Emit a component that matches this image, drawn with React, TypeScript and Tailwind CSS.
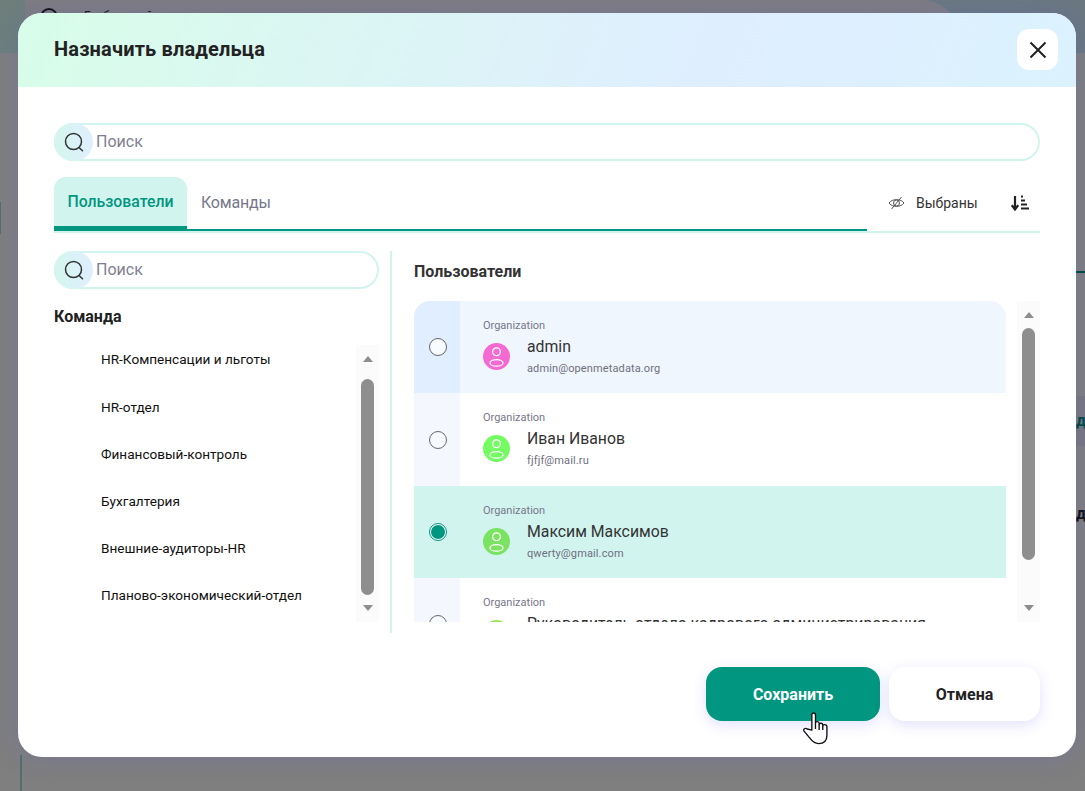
const users = [
  { name: 'admin', email: 'admin@openmetadata.org', avatar: 'bg-[#f569d2]', row: 'bg-[#eff6fe]', cell: 'bg-[#e0eeff]', rowH: 'h-[92px]', checked: false },
  { name: 'Иван Иванов', email: 'fjfjf@mail.ru', avatar: 'bg-[#73fd62]', row: 'bg-white', cell: 'bg-[#f4f8fe]', rowH: 'h-[93px]', checked: false },
  { name: 'Максим Максимов', email: 'qwerty@gmail.com', avatar: 'bg-[#7ae362]', row: 'bg-[#d2f4ef]', cell: 'bg-[#d2f4ef]', rowH: 'h-[92px]', checked: true },
  { name: 'Руководитель отдела кадрового администрирования', email: 'hr@mail.ru', avatar: 'bg-[#a3dc5f]', row: 'bg-white', cell: 'bg-[#f4f8fe]', rowH: 'h-[92px]', checked: false },
]

const teams = [
  'HR-Компенсации и льготы',
  'HR-отдел',
  'Финансовый-контроль',
  'Бухгалтерия',
  'Внешние-аудиторы-HR',
  'Планово-экономический-отдел',
]

function SearchIcon() {
  return (
    <svg width="20" height="20" viewBox="0 0 20 20" fill="none" stroke="#333" strokeWidth="1.5">
      <circle cx="9.5" cy="9.5" r="8" />
      <path d="M15 15.5 L18.5 18.8" strokeLinecap="round" />
    </svg>
  )
}

function SearchBox() {
  return (
    <div className="flex h-[38px] items-center rounded-full border-2 border-[#d2f4ef]">
      <div className="-ml-[2px] flex h-[38px] w-[39px] shrink-0 items-center justify-center rounded-full bg-gradient-to-r from-[#d4f6ec] to-[#dfeeff]">
        <SearchIcon />
      </div>
      <span className="ml-[3px] text-base text-[#7f7f8f]">Поиск</span>
    </div>
  )
}

function Scrollbar({ thumb }: { thumb: string }) {
  return (
    <div className="flex h-full w-[23px] shrink-0 flex-col items-center bg-[#fbfbfb] pt-[11px]">
      <div className="h-0 w-0 border-x-[5.5px] border-b-[6px] border-x-transparent border-b-[#8e8e8e]" />
      <div className={`w-[13px] rounded-full bg-[#8e8e8e] ${thumb}`} />
      <div className="h-0 w-0 border-x-[5.5px] border-t-[6px] border-x-transparent border-t-[#8e8e8e]" />
    </div>
  )
}

function UserIcon() {
  return (
    <svg width="15" height="20" viewBox="0 0 15 20" fill="none" stroke="#fff" strokeWidth="1.3">
      <circle cx="7.5" cy="4.7" r="3.9" />
      <ellipse cx="7.5" cy="15.9" rx="6.5" ry="3.3" />
    </svg>
  )
}

function UserRow({ user }: { user: (typeof users)[number] }) {
  return (
    <div className={`flex shrink-0 ${user.rowH} ${user.row}`}>
      <div className={`flex w-[46px] shrink-0 items-center justify-center pl-[2px] ${user.cell}`}>
        {user.checked ? (
          <div className="flex h-[18px] w-[18px] items-center justify-center rounded-full border border-[#00967f] bg-white">
            <div className="h-[14px] w-[14px] rounded-full bg-[#00967f]" />
          </div>
        ) : (
          <div className="h-[18px] w-[18px] rounded-full border border-[#666] bg-[#f8fbff]" />
        )}
      </div>
      <div className="min-w-0 flex-1 pl-[23px] pt-[18px]">
        <p className="h-[14px] text-[11px] leading-[14px] text-[#77778a]">Organization</p>
        <div className="flex items-start gap-[17px]">
          <div className={`mt-[10px] flex h-[27px] w-[27px] shrink-0 items-center justify-center rounded-full ${user.avatar}`}>
            <UserIcon />
          </div>
          <div className="mt-[2px] min-w-0">
            <p className="h-[24px] whitespace-nowrap text-[15.8px] leading-[24px] text-[#333]">{user.name}</p>
            <p className="mt-[3px] text-[11px] leading-[14px] tracking-[0.12px] text-[#6f6f7f]">{user.email}</p>
          </div>
        </div>
      </div>
    </div>
  )
}

export default function App() {
  return (
    <div className="relative h-[791px] w-[1085px] overflow-hidden bg-white font-['Roboto',sans-serif]">
      {/* page behind the dialog */}
      <div className="flex h-[53px] bg-gradient-to-r from-[#dcfff6] to-[#d6f1ff] pl-[25px] pr-[124px]">
        <div className="flex h-full flex-1 items-start gap-[26px] rounded-tr-[40px] bg-[#fdfbff] pl-[15px] pt-[8px] text-xs text-[#333]">
          <div className="h-[18px] w-[18px] rounded-full border-2 border-[#222]" />
          <span>Глобальный поиск</span>
        </div>
      </div>
      <div className="flex h-[738px] justify-between">
        <div className="w-[21px]">
          <div className="mt-[149px] h-[32px] w-px bg-[#a8dcd8]" />
          <div className="ml-[20px] mt-[521px] h-[36px] w-[2px] bg-[#a8dcd8]" />
        </div>
        <div className="w-[9px] overflow-hidden whitespace-nowrap text-base font-bold">
          <div className="mt-[218px] h-[2px] bg-[#00967f]" />
          <p className="mt-[123px] bg-[#f0f0f8] py-[13px] leading-[24px] text-[#00967f]">данные</p>
          <p className="mt-[56px] leading-[24px] text-[#222]">дата</p>
        </div>
      </div>
      <div className="absolute inset-0 bg-black/50" />

      {/* dialog */}
      <div className="absolute left-[18px] top-[13px] flex h-[744px] w-[1058px] flex-col overflow-hidden rounded-[24px] bg-white shadow-[0_0_28px_rgba(70,70,255,0.16)]">
        <div className="flex h-[74px] shrink-0 items-center justify-between bg-[linear-gradient(110deg,#d8fde9_0%,#dfeeff_65%,#dbf2fe_100%)] pb-[1px] pl-[36px] pr-[18px]">
          <h1 className="-mt-[1px] text-xl font-bold tracking-[0.16px] text-[#222]">Назначить владельца</h1>
          <button className="flex h-[41px] w-[41px] items-center justify-center rounded-xl bg-white">
            <svg width="18" height="18" viewBox="0 0 18 18" stroke="#222" strokeWidth="2">
              <path d="M1.5 1.5 L16.5 16.5 M16.5 1.5 L1.5 16.5" />
            </svg>
          </button>
        </div>

        <div className="flex flex-1 flex-col px-[36px] pt-[36px]">
          <SearchBox />

          <div className="mt-[16px] flex h-[56px] shrink-0 border-b-2 border-[#d2f4ef]">
            <div className="flex h-[54px] w-[813px] shrink-0 items-start border-b-2 border-[#00967f]">
              <div className="flex h-[53px] w-[133px] items-center justify-center rounded-t-xl border-b-4 border-[#00967f] bg-[#d2f4ef] text-[15.8px] font-medium text-[#00967f]">
                Пользователи
              </div>
              <div className="flex h-[51px] items-center pl-[14px] text-base tracking-[-0.2px] text-[#77778a]">Команды</div>
            </div>
            <div className="flex flex-1 items-center pb-[3px] pl-[21px] pr-[11px]">
              <svg width="17" height="14" viewBox="0 0 17 14" fill="none" stroke="#555" strokeWidth="1">
                <path d="M1 7 C4 2.5 13 2.5 16 7 C13 11.5 4 11.5 1 7 Z" />
                <circle cx="8.5" cy="7" r="3" />
                <path d="M3.5 13 L13.5 1" />
              </svg>
              <span className="ml-[11px] text-sm text-[#333]">Выбраны</span>
              <svg className="ml-auto" width="18" height="16" viewBox="0 0 18 16" fill="none" stroke="#222">
                <path d="M4 1 V14" strokeWidth="2.2" />
                <path d="M0.8 10.2 L4 14.5 L7.2 10.2" strokeWidth="2.2" />
                <path d="M10 1.5 H12 M10 5.5 H14 M10 9.5 H16 M10 13.5 H18" strokeWidth="2" />
              </svg>
            </div>
          </div>

          <div className="mt-[18px] flex h-[382px] shrink-0">
            <div className="w-[325px] shrink-0">
              <SearchBox />
              <h2 className="mt-[16px] text-base font-bold leading-[24px] text-[#222]">Команда</h2>
              <div className="mt-[16px] flex h-[277px]">
                <div className="flex flex-1 flex-col gap-[27.2px] pl-[47px] pt-[4.4px]">
                  {teams.map((team) => (
                    <p key={team} className="text-[13.6px] leading-[20px] text-[#111]">{team}</p>
                  ))}
                </div>
                <Scrollbar thumb="mt-[17px] mb-[10px] h-[216px]" />
              </div>
            </div>
            <div className="ml-[11px] flex-1 border-l-2 border-[#d2f4ef] pl-[22px]">
              <h2 className="mt-[9px] text-base font-bold leading-[24px] text-[#333]">Пользователи</h2>
              <div className="mt-[17px] flex h-[321px] gap-[11px]">
                <div className="flex flex-1 flex-col overflow-hidden rounded-t-2xl">
                  {users.map((user) => (
                    <UserRow key={user.name} user={user} />
                  ))}
                </div>
                <Scrollbar thumb="mt-[10px] mb-[45px] h-[232px]" />
              </div>
            </div>
          </div>

          <div className="mt-[34px] flex justify-end gap-[9px]">
            <button className="h-[54px] w-[174px] rounded-2xl bg-[#00967f] pt-[1px] text-base font-bold text-white shadow-[0_4px_14px_rgba(90,90,255,0.18)]">Сохранить</button>
            <button className="h-[54px] w-[151px] rounded-2xl bg-white pt-[1px] text-base font-bold text-[#222] shadow-[0_4px_14px_rgba(90,90,255,0.18)]">Отмена</button>
          </div>
        </div>
      </div>

      {/* mouse cursor */}
      <svg className="absolute left-[803px] top-[712px]" width="26" height="33" viewBox="0 0 25 31" fill="#fff" stroke="#111" strokeWidth="1.3" strokeLinejoin="round">
        <path d="M8.5 17 V2.5 C8.5 0 12 0 12 2.5 V10 C12 8.5 15.5 8.5 15.5 10.5 V12 C15.5 10 19 10 19 12 V13 C19 11 23 11.5 23 13.5 V22 C23 27 20 30 15 30 C11 30 9 28 6 24 L1 18 C0 16 2 14.5 4 16 Z" />
        <path d="M12 10 V16 M15.5 12 V17 M19 13 V17" fill="none" />
      </svg>
    </div>
  )
}
